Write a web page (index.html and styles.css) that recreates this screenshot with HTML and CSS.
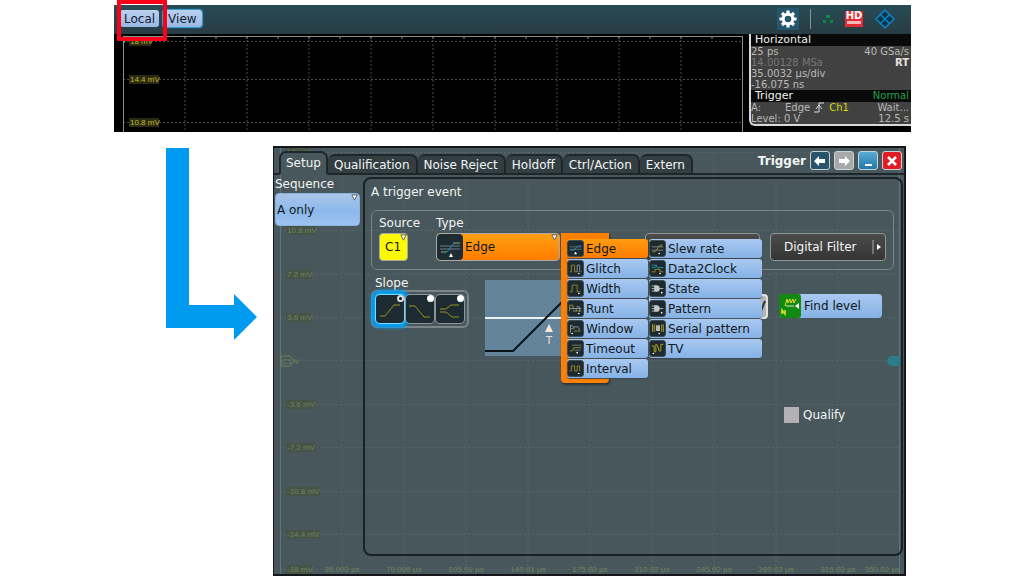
FILE: index.html
```
<!DOCTYPE html>
<html lang="en">
<head>
    <meta charset="UTF-8">
    <meta name="viewport" content="width=device-width, initial-scale=1.0">
    <title>Trigger setup</title>
    <link rel="stylesheet" href="styles.css">
</head>
<body>
    <!-- Shared icons -->
    <svg class="sprite" width="0" height="0" aria-hidden="true">
        <symbol id="i-edge" viewBox="0 0 18 18">
            <path d="M2 7h14M2 10h14" stroke="#5f7880"/>
            <path d="M3 11h4l5-5h4" stroke="#2f8fb8"/>
            <path d="M7 16l2-3 2 3z" fill="#fff" stroke="none"/>
        </symbol>
        <symbol id="i-glitch" viewBox="0 0 18 18">
            <path d="M2 13h2V5h4v8h3M15 13h1"/>
            <path d="M11 13V5h3v8" stroke="#9a9f9a"/>
            <circle cx="13" cy="15" r="1"/>
        </symbol>
        <symbol id="i-width" viewBox="0 0 18 18">
            <path d="M2 13h3V5h6v8h4"/>
            <circle cx="13" cy="15" r="1"/>
        </symbol>
        <symbol id="i-runt" viewBox="0 0 18 18">
            <path d="M2 12V5h4v4h4v3h6"/>
            <path d="M2 9h14M10 7h4v6M6 12h4" stroke="#9a9f9a"/>
            <circle cx="13" cy="15" r="1"/>
        </symbol>
        <symbol id="i-window" viewBox="0 0 18 18">
            <path d="M3 14V5l4 2v3M7 7h5l2 4" stroke="#9a9f9a"/>
            <path d="M3 9h3M7 12h8"/>
            <circle cx="5" cy="15" r="1"/>
        </symbol>
        <symbol id="i-timeout" viewBox="0 0 18 18">
            <path d="M2 12h3l2-4h9"/>
            <path d="M5 5h11M7 11h8" stroke="#77817f"/>
            <circle cx="11" cy="14" r="1"/>
        </symbol>
        <symbol id="i-interval" viewBox="0 0 18 18">
            <path d="M2 12h2V6h4v6h3V6h3v6"/>
            <circle cx="13" cy="15" r="1"/>
        </symbol>
        <symbol id="i-slew" viewBox="0 0 18 18">
            <path d="M2 7h14M2 11h14" stroke="#8b9291"/>
            <path d="M3 13h3l6-8h3"/>
            <circle cx="11" cy="15" r="1"/>
        </symbol>
        <symbol id="i-clock" viewBox="0 0 18 18">
            <path d="M2 5h5l2 3h7M2 8h4l2-3" stroke="#28a0b4"/>
            <path d="M2 13h4v-3h6v3h4"/>
            <circle cx="12" cy="15" r="1"/>
        </symbol>
        <symbol id="i-state" viewBox="0 0 18 18">
            <path d="M5 5h3c5 0 5 8 0 8H5z" fill="#c4c8c8" stroke="none"/>
            <path d="M2 6h4M2 9h5M2 12h4M11 9h5" stroke="#c4c8c8"/>
            <circle cx="14" cy="14" r="1"/>
        </symbol>
        <symbol id="i-serial" viewBox="0 0 18 18">
            <path d="M3 4v9M5 4v9M14 4v9M16 4v9" stroke="#c7b41c"/>
            <path d="M7 5h5v7H7z" fill="#b5b8b4" stroke="none"/>
            <circle cx="11" cy="15" r="1"/>
        </symbol>
        <symbol id="i-tv" viewBox="0 0 18 18">
            <path d="M2 6h3v7h2V4l2 1 2 7h2V4h3" stroke="#c7b41c"/>
            <circle cx="4" cy="15" r="1"/>
        </symbol>
        <symbol id="i-drop" viewBox="0 0 8 8">
            <path d="M1 1h6L4 7z" fill="#fff" stroke="#555"/>
        </symbol>
    </svg>

    <main class="slide">
        <!-- Main screen of the scope -->
        <section class="scope">
            <header class="toolbar">
                <div class="marked"><button type="button" class="tool">Local</button></div>
                <button type="button" class="tool tool-view">View</button>
                <div class="status">
                    <button type="button" class="gear" aria-label="Settings">
                        <svg width="20" height="20" viewBox="-10 -10 20 20">
                            <circle r="4.8" fill="none" stroke="#fff" stroke-width="3"/>
                            <path d="M0-8.5V-5M0 8.5V5M-8.5 0H-5M8.5 0H5M-6-6l2.5 2.5M6 6L3.5 3.5M-6 6l2.5-2.5M6-6L3.500-3.500" stroke="#fff" stroke-width="3.2"/>
                        </svg>
                    </button>
                    <span class="divider"></span>
                    <svg width="12" height="10" viewBox="0 0 12 10" fill="#0b8a44">
                        <path d="M4 1h4v3H4zM1 6h3v3H1zM8 6h3v3H8z"/>
                    </svg>
                    <span class="hd">HD<i></i></span>
                    <svg width="22" height="22" viewBox="0 0 22 22" fill="#0b3448" stroke="#0a86c8" stroke-width="1.5">
                        <path d="M11 2l9 9-9 9-9-9zM6.500 6.500l9 9M15.500 6.500l-9 9"/>
                    </svg>
                </div>
            </header>
            <div class="screen">
                <div class="plot">
                    <svg class="grid" id="plot-grid"></svg>
                </div>
                <aside class="info">
                    <h2>Horizontal</h2>
                    <p><span>25 ps</span><span>40 GSa/s</span></p>
                    <p><span class="dim">14.00128 MSa</span><b>RT</b></p>
                    <p>35.0032 µs/div</p>
                    <p>-16.075 ns</p>
                    <h2>Trigger<span class="green">Normal</span></h2>
                    <p class="event">
                        <span>A:</span><span class="edge">Edge</span>
                        <svg width="11" height="11" viewBox="0 0 11 11" fill="none" stroke="#ddd"><path d="M0 10h5V1h5M2 7l3-4 3 4"/></svg>
                        <span class="yellow">Ch1</span><span class="wait">Wait...</span>
                    </p>
                    <p><span>Level: 0 V</span><span>12.5 s</span></p>
                </aside>
            </div>
        </section>

        <div class="detail">
            <svg class="arrow" width="91" height="192" viewBox="0 0 91 192" aria-hidden="true">
                <path d="M0 0H23V157H68V146L91 169 68 192V180H0z" fill="#009bf0"/>
            </svg>

            <!-- Trigger dialog -->
            <section class="dialog">
                <svg class="backdrop" id="dialog-grid"></svg>
                <header class="titlebar">
                    <nav class="tabs">
                        <button type="button" class="tab active">Setup</button>
                        <button type="button" class="tab">Qualification</button>
                        <button type="button" class="tab">Noise Reject</button>
                        <button type="button" class="tab">Holdoff</button>
                        <button type="button" class="tab">Ctrl/Action</button>
                        <button type="button" class="tab">Extern</button>
                    </nav>
                    <h1>Trigger</h1>
                    <button type="button" class="win back" aria-label="Back"><svg width="12" height="10" viewBox="0 0 12 10"><path d="M0 5l5-5v3h6v4H5v3z" fill="#fff"/></svg></button>
                    <button type="button" class="win next" aria-label="Forward"><svg width="12" height="10" viewBox="0 0 12 10"><path d="M12 5L7 0v3H1v4h6v3z" fill="#fff"/></svg></button>
                    <button type="button" class="win min" aria-label="Minimize"><svg width="12" height="10" viewBox="0 0 12 10"><path d="M3 9h7" stroke="#fff" stroke-width="2"/></svg></button>
                    <button type="button" class="win close" aria-label="Close"><svg width="12" height="10" viewBox="0 0 12 10"><path d="M2 1l8 8M10 1L2 9" stroke="#fff" stroke-width="2.5"/></svg></button>
                </header>

                <div class="content">
                    <div class="sequence">
                        <label for="sequence">Sequence</label>
                        <div class="picker">
                            <select id="sequence" class="blue"><option>A only</option></select>
                            <svg class="drop"><use href="#i-drop"/></svg>
                        </div>
                    </div>

                    <div class="panel">
                        <p class="caption">A trigger event</p>

                        <div class="group">
                            <div class="field source">
                                <label for="source">Source</label>
                                <div class="picker">
                                    <select id="source"><option>C1</option></select>
                                    <svg class="drop"><use href="#i-drop"/></svg>
                                </div>
                            </div>
                            <div class="field type">
                                <label for="type">Type</label>
                                <div class="picker">
                                    <select id="type"><option>Edge</option></select>
                                    <svg class="type-icon" viewBox="0 0 26 26">
                                        <path d="M3 12h20M3 15h20" stroke="#6c8088"/>
                                        <path d="M4 18h6l7-9h6" stroke="#2f8fb8"/>
                                        <path d="M16 9h7M4 18h5" stroke="#8d8430"/>
                                        <path d="M12 23l2-4 2 4z" fill="#fff" stroke="none"/>
                                    </svg>
                                    <svg class="drop"><use href="#i-drop"/></svg>
                                    <div class="menu">
                                        <div class="column">
                                            <button type="button" class="item selected"><svg><use href="#i-edge"/></svg>Edge</button>
                                            <button type="button" class="item"><svg><use href="#i-glitch"/></svg>Glitch</button>
                                            <button type="button" class="item"><svg><use href="#i-width"/></svg>Width</button>
                                            <button type="button" class="item"><svg><use href="#i-runt"/></svg>Runt</button>
                                            <button type="button" class="item"><svg><use href="#i-window"/></svg>Window</button>
                                            <button type="button" class="item"><svg><use href="#i-timeout"/></svg>Timeout</button>
                                            <button type="button" class="item"><svg><use href="#i-interval"/></svg>Interval</button>
                                        </div>
                                        <div class="column wide">
                                            <button type="button" class="item"><svg><use href="#i-slew"/></svg>Slew rate</button>
                                            <button type="button" class="item"><svg><use href="#i-clock"/></svg>Data2Clock</button>
                                            <button type="button" class="item"><svg><use href="#i-state"/></svg>State</button>
                                            <button type="button" class="item"><svg><use href="#i-state"/></svg>Pattern</button>
                                            <button type="button" class="item"><svg><use href="#i-serial"/></svg>Serial pattern</button>
                                            <button type="button" class="item"><svg><use href="#i-tv"/></svg>TV</button>
                                        </div>
                                    </div>
                                </div>
                            </div>
                            <button type="button" class="dark covered" aria-label="Filter"></button>
                            <button type="button" class="dark filter">
                                <span>Digital Filter</span>
                                <svg width="10" height="16" viewBox="0 0 10 16"><path d="M1 1v14" stroke="#aaa"/><path d="M5 5l4 3-4 3z" fill="#fff"/></svg>
                            </button>
                        </div>

                        <div class="row">
                            <div class="slope">
                                <span class="slope-title">Slope</span>
                                <div class="slopes">
                                    <label class="option"><input type="radio" name="slope" aria-label="Rising" checked><svg viewBox="0 0 28 28"><path d="M4 21h5l9-11h6"/></svg></label>
                                    <label class="option"><input type="radio" name="slope" aria-label="Falling"><svg viewBox="0 0 28 28"><path d="M3 11h6l9 11h6"/></svg></label>
                                    <label class="option"><input type="radio" name="slope" aria-label="Either"><svg viewBox="0 0 28 28"><path d="M4 14h6l5-4h8M4 17h6l6 5h7"/></svg></label>
                                </div>
                            </div>
                            <svg class="preview" width="124" height="76" viewBox="0 0 124 76">
                                <path d="M0 0h124v76H0z" fill="#64849b"/>
                                <path d="M0 38h124" stroke="#eef3f6" stroke-width="2"/>
                                <path d="M0 71h28l62-62h34" fill="none" stroke="#0b1216" stroke-width="2"/>
                                <path d="M60 52l4-8 4 8z" fill="#fbe9dc"/>
                                <text x="64" y="64" text-anchor="middle">T</text>
                            </svg>
                            <div class="level">
                                <input type="text" aria-label="Level">
                                <svg width="6" height="14" viewBox="0 0 6 14"><path d="M0 12L4 2" stroke="#333" stroke-width="2"/></svg>
                            </div>
                            <button type="button" class="find">
                                <svg width="22" height="24" viewBox="0 0 22 24">
                                    <rect width="22" height="24" rx="3" fill="#128a12"/>
                                    <path d="M3 20v-4l3 4v-4" fill="none" stroke="#e6dc28" stroke-width="1.5"/>
                                    <path d="M6 12l2-7 1 4 2-4 1 4 2-4 1 4 2-4" fill="none" stroke="#e6dc28"/>
                                    <path d="M7 12h8" stroke="#d8e8d0"/>
                                    <path d="M20 9v6l-4-3z" fill="#fff"/>
                                </svg>
                                Find level
                            </button>
                        </div>

                        <label class="qualify"><input type="checkbox">Qualify</label>
                    </div>
                </div>
            </section>
        </div>
    </main>

    <script src="grid.js"></script>
</body>
</html>
```
FILE: styles.css
```
body {
    margin: 0;
    background: #fff;
    font-family: "DejaVu Sans", Verdana, sans-serif;
    font-size: 12px;
    line-height: 14px;
    color: #f2f5f5;
}

button,
input,
select {
    box-sizing: border-box;
    margin: 0;
    font: inherit;
    color: inherit;
}

button {
    padding: 0;
    border: none;
    background: none;
}

h1,
h2,
p {
    margin: 0;
}

svg {
    display: block;
    flex: none;
}

.sprite {
    position: absolute;
}

.slide {
    padding: 5px 113px 0 114px;
}

/* Main screen */
.scope {
    background: #000;
}

.toolbar {
    display: flex;
    align-items: center;
    height: 29px;
    padding: 0 15px 2px 6px;
    box-sizing: border-box;
    background: linear-gradient(#284b55, #283c44);
}

.marked {
    position: relative;
}

.marked::after {
    content: "";
    position: absolute;
    inset: -10px -8px -14px -3px;
    border: 4px solid #fa0019;
}

.tool {
    display: block;
    height: 17px;
    padding: 0 4px;
    border-radius: 3px;
    background: linear-gradient(#bcd0ee, #98b8e4);
    color: #14202c;
}

.tool-view {
    padding: 0 5px;
    margin-left: 4px;
    box-shadow: 0 0 1px 1px #2fa8dc;
}

.status {
    display: flex;
    align-items: center;
    gap: 11px;
    margin-left: auto;
}

.gear {
    padding: 1px;
    background: #24566c;
}

.divider {
    width: 1px;
    height: 20px;
    background: #7f969c;
}

.hd {
    width: 18px;
    height: 16px;
    background: #e52b33;
    color: #fff;
    font-size: 10px;
    line-height: 10px;
    font-weight: bold;
    text-align: center;
}

.hd i {
    display: block;
    height: 3px;
    margin: 0 2px;
    background: #f6b9bb;
}

.screen {
    display: flex;
    height: 98px;
}

.plot {
    flex: 1;
    padding: 2px 6px 0 9px;
}

.grid {
    width: 100%;
    height: 96px;
    overflow: hidden;
}

.grid .line {
    stroke: #4a4a4a;
    stroke-dasharray: 2 2;
}

.grid .axis {
    stroke: #8c8c8c;
    stroke-width: 2;
}

.grid .tick {
    stroke: #8c8c8c;
}

.grid rect {
    fill: #2b2a12;
}

.grid text,
.backdrop text {
    font-family: "Liberation Sans", Arial, sans-serif;
    font-size: 8px;
}

.grid text {
    fill: #c3bb2c;
}

.info {
    width: 162px;
    height: 92px;
    box-sizing: border-box;
    border: solid #d8d8d8;
    border-width: 0 0 2px 2px;
    border-radius: 0 0 0 6px;
    background: #414141;
    color: #b9b9b9;
    font-size: 10px;
    line-height: 11px;
    overflow: hidden;
}

.info h2,
.info p {
    display: flex;
    justify-content: space-between;
    padding-right: 2px;
}

.info h2 {
    height: 12px;
    padding-left: 4px;
    background: #0a0a0a;
    color: #f0f0f0;
    font-size: 11px;
    line-height: 12px;
    font-weight: normal;
}

.info b {
    color: #e4e4e4;
}

.dim {
    color: #777;
}

.info .green {
    color: #1fa04c;
    font-size: 10px;
}

.event {
    gap: 4px;
}

.edge {
    margin-left: 20px;
}

.yellow {
    color: #d6d60a;
}

.wait {
    margin-left: auto;
}

/* Dialog with arrow */
.detail {
    display: flex;
    align-items: flex-start;
    gap: 16px;
    padding: 14px 5px 0 52px;
}

.arrow {
    margin-top: 2px;
}

.dialog {
    position: relative;
    flex: 1;
    box-sizing: border-box;
    border: solid #14181a;
    border-width: 2px 2px 2px 1px;
    background: #48575b;
}

.backdrop {
    position: absolute;
    top: 0;
    left: 6px;
    width: calc(100% - 10px);
    height: 100%;
}

.backdrop .line {
    stroke: #54656a;
    stroke-dasharray: 2 2;
}

.backdrop .axis {
    stroke: #5f747d;
    stroke-width: 2;
}

.backdrop rect {
    fill: #465448;
}

.backdrop text {
    fill: #6e855c;
}

.titlebar {
    position: relative;
    display: flex;
    align-items: center;
    gap: 4px;
    height: 27px;
    padding: 0 2px 0 5px;
    box-sizing: border-box;
    border-bottom: 2px solid #1d272b;
}

.tabs {
    display: flex;
    align-self: flex-end;
    margin: 0 auto -2px 0;
}

.tab {
    height: 21px;
    padding: 0 6px;
    border: 2px solid #1d272b;
    border-left-width: 0;
    border-radius: 7px 7px 0 0;
    background: #333e42;
}

.tab.active {
    height: 24px;
    margin-top: -3px;
    padding: 0 5px;
    border-left-width: 2px;
    border-bottom-color: #48575b;
    background: #48575b;
}

.titlebar h1 {
    font-size: 12px;
    font-weight: bold;
}

.win {
    display: flex;
    align-items: center;
    justify-content: center;
    width: 20px;
    height: 19px;
    border: 1px solid #c6d3d8;
    border-radius: 3px;
}

.back {
    background: #28536b;
}

.next {
    background: #a8a8a8;
}

.min {
    background: linear-gradient(#5aabd2, #2278a8);
}

.close {
    background: #e31b23;
}

.content {
    position: relative;
    display: flex;
    gap: 3px;
    padding: 2px 1px 18px 1px;
}

.sequence {
    width: 85px;
}

.sequence label,
.field label,
.slope-title {
    display: block;
}

.sequence select {
    width: 85px;
    height: 33px;
    padding-left: 1px;
}

.picker {
    position: relative;
    margin-top: 2px;
}

.field .picker {
    margin-top: 3px;
}

select {
    display: block;
    appearance: none;
    border: 1px solid #a9a9a9;
    border-radius: 4px;
    color: #101820;
}

select.blue {
    border-color: #8db2de;
    background: linear-gradient(#aac6ea, #8cb8ea 55%, #9dc3f0);
}

.drop {
    position: absolute;
    top: 1px;
    right: 2px;
    width: 7px;
    height: 7px;
}

.panel {
    flex: 1;
    min-height: 379px;
    padding: 6px 7px 0 6px;
    box-sizing: border-box;
    border: 2px solid #182226;
    border-radius: 8px;
}

.group {
    display: flex;
    align-items: flex-end;
    height: 60px;
    margin-top: 11px;
    padding: 0 7px 8px;
    box-sizing: border-box;
    border: 1px solid #7a8588;
    border-radius: 6px;
}

.source {
    width: 57px;
}

.source select {
    width: 29px;
    height: 28px;
    padding: 0 0 0 5px;
    background: #fbf808;
}

.source .drop {
    right: 29px;
}

.type select {
    width: 124px;
    height: 28px;
    padding: 0 0 0 28px;
    background: linear-gradient(#ffa010, #ff7c00);
}

.type-icon {
    position: absolute;
    top: 1px;
    left: 1px;
    width: 26px;
    height: 26px;
    border-radius: 4px;
    background: #1d2b33;
    fill: none;
}

/* Open list of trigger types */
.menu {
    position: absolute;
    top: 0;
    left: 125px;
    z-index: 1;
    display: flex;
    gap: 1px;
    padding: 6px 0 4px 6px;
}

.menu::before {
    content: "";
    position: absolute;
    inset: 0 auto 0 0;
    width: 48px;
    border-radius: 0 0 4px 4px;
    background: #ff8000;
    box-shadow: 1px 2px 2px #2a3438;
}

.column {
    position: relative;
    width: 81px;
}

.column.wide {
    width: 113px;
}

.item {
    display: flex;
    align-items: center;
    gap: 2px;
    width: 100%;
    height: 19px;
    margin-bottom: 1px;
    border-radius: 3px;
    background: linear-gradient(#a9c9f0, #86b2e6);
    box-shadow: 0 1px 1px #3a4850;
    color: #101820;
}

.item.selected {
    background: linear-gradient(#ff9c10, #ff7c00);
}

.item svg {
    width: 17px;
    height: 17px;
    border: 1px solid #3f4c54;
    border-radius: 3px;
    background: #1d2b30;
    box-sizing: border-box;
    fill: none;
    stroke: #a3922a;
}

.item circle,
symbol circle {
    fill: #fff;
    stroke: none;
}

.dark {
    height: 28px;
    border: 1px solid #8f9494;
    border-radius: 4px;
    background: linear-gradient(#4b4b4b, #353535);
}

.covered {
    width: 115px;
    margin: 0 10px 0 auto;
}

.filter {
    display: flex;
    align-items: center;
    justify-content: space-between;
    width: 116px;
    padding: 0 3px 0 13px;
}

.row {
    display: flex;
    align-items: flex-start;
    margin-top: 6px;
    padding-right: 12px;
}

.slope-title {
    padding-left: 4px;
}

.slopes {
    display: flex;
    gap: 2px;
    padding: 3px;
    border: 2px solid #7a8588;
    border-radius: 6px;
}

.option {
    position: relative;
    width: 28px;
    height: 28px;
    border-radius: 4px;
    background: #1d2b33;
    box-shadow: 0 0 0 1px #8c979b;
}

.option:has(:checked) {
    box-shadow: 0 0 1px 1px #8adcff, 0 0 3px 5px #009cee;
}

.option svg {
    fill: none;
    stroke: #9c8f22;
}

.option input {
    position: absolute;
    top: 0;
    right: 0;
    width: 7px;
    height: 7px;
    appearance: none;
    border-radius: 50%;
    background: #fff;
}

.option input:checked {
    border: 2px solid #ddd;
    background: #111;
}

.preview {
    margin: 4px 0 0 16px;
}

.preview text {
    fill: #eee0d8;
    font-size: 10px;
}

.level {
    position: relative;
    margin: 18px 11px 0 auto;
}

.level input {
    display: block;
    width: 119px;
    height: 25px;
    border: 2px solid #e2e2e2;
    border-radius: 4px;
    background: #b4b4b4;
    color: #222;
}

.level svg {
    position: absolute;
    top: 5px;
    right: 1px;
}

.find {
    display: flex;
    align-items: center;
    gap: 3px;
    width: 103px;
    height: 24px;
    margin-top: 18px;
    border-radius: 4px;
    background: linear-gradient(#a9c9f0, #86b2e6);
    color: #101820;
}

.qualify {
    display: flex;
    align-items: center;
    gap: 4px;
    width: 110px;
    margin: 51px 0 0 auto;
}

.qualify input {
    width: 15px;
    height: 16px;
    appearance: none;
    background: #b3b1b3;
}
```
FILE: grid.js
```
const NS = 'http://www.w3.org/2000/svg';

function add(parent, tag, attrs, text) {
    const el = document.createElementNS(NS, tag);
    for (const key in attrs) el.setAttribute(key, attrs[key]);
    if (text) el.textContent = text;
    parent.appendChild(el);
}

// Draws ten divisions across and a labelled line per voltage
function drawGrid(svg, rows, height) {
    for (let i = 1; i < 10; i++) {
        const x = i * 10 + '%';
        add(svg, 'line', { class: 'line', x1: x, x2: x, y1: 0, y2: height });
    }
    rows.forEach(([y, label]) => {
        add(svg, 'line', { class: 'line', x1: 0, x2: '100%', y1: y + 0.5, y2: y + 0.5 });
        if (!label) return;
        add(svg, 'rect', { x: 6, y: y - 4, width: label.length * 4 + 2, height: 9 });
        add(svg, 'text', { x: 7, y: y + 3 }, label);
    });
    add(svg, 'line', { class: 'axis', x1: 0, x2: 0, y1: 0, y2: height });
    add(svg, 'line', { class: 'axis', x1: '100%', x2: '100%', y1: 0, y2: height });
}

const plot = document.getElementById('plot-grid');
drawGrid(plot, [[5, '18 mV'], [43, '14.4 mV'], [86, '10.8 mV']], 96);
add(plot, 'line', { class: 'axis', x1: 0, x2: '100%', y1: 0, y2: 0 });
for (let i = 1; i < 20; i++) {
    add(plot, 'line', { class: 'tick', x1: i * 5 + '%', x2: i * 5 + '%', y1: 0, y2: 3 });
}
add(plot, 'path', { d: 'M0 4h3l-3 5z', fill: '#19d3d3' });

const dialog = document.getElementById('dialog-grid');
drawGrid(dialog, [
    [4, '18 mV'], [82, '10.8 mV'], [126, '7.2 mV'], [169, '3.6 mV'], [212, ''],
    [256, '-3.6 mV'], [299, '-7.2 mV'], [343, '-10.8 mV'], [386, '-14.4 mV'], [421, '-18 mV']
], 428);
add(dialog, 'path', { d: 'M-5 0h6l-3 5z', fill: '#19a3a8' });
add(dialog, 'path', { d: 'M1 208h9l4 5-4 5H1z', fill: 'none', stroke: '#718259' });
add(dialog, 'text', { x: 2, y: 216 }, 'C1');
add(dialog, 'text', { x: 14, y: 216 }, 'V');

// Trigger level marker on the right axis
add(dialog, 'svg', { id: 'marker', x: '100%', y: 208, overflow: 'visible' });
add(document.getElementById('marker'), 'path', { d: 'M0 0h-10l-4 5 4 5h10z', fill: '#2b7c88' });

const times = ['35.003', '70.006', '105.01', '140.01', '175.02', '210.02', '245.02', '280.02', '315.03'];
times.forEach((time, i) => {
    add(dialog, 'text', { x: (i + 1) * 10 + '%', y: 424, 'text-anchor': 'middle' }, time + ' µs');
});
add(dialog, 'text', { x: '100%', y: 424, 'text-anchor': 'end' }, '350.02 µs');
```
